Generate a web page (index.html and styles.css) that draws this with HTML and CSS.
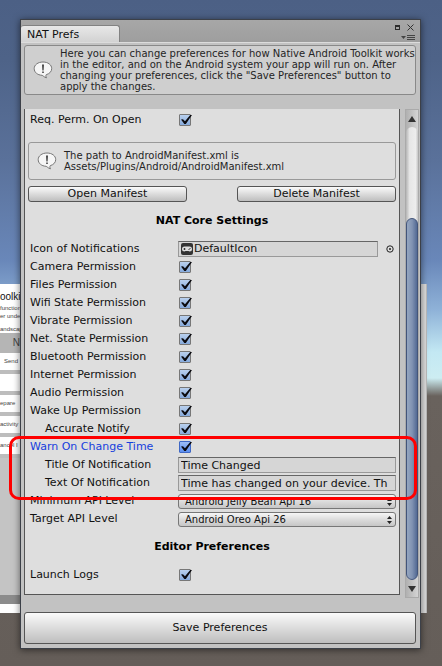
FILE: index.html
```html
<!DOCTYPE html>
<html lang="en">
<head>
<meta charset="utf-8">
<meta name="viewport" content="width=device-width, initial-scale=1">
<title>NAT Prefs</title>
<link rel="stylesheet" href="styles.css">
</head>
<body>
<div class="scene" aria-hidden="true">
  <div class="game">
    <div class="game-head">
      <div class="game-title">oolki</div>
      <div>function</div>
      <div>er under</div>
      <div class="game-last">andscap</div>
    </div>
    <div class="game-bar">N</div>
    <div class="game-item game-end">Send</div>
    <div class="game-item">&nbsp;</div>
    <div class="game-item">epare</div>
    <div class="game-item">activity</div>
    <div class="game-item">ancel I</div>
    <div class="game-foot"></div>
  </div>
</div>

<main class="window">
  <header class="titlebar">
    <div class="tab">NAT Prefs</div>
    <div class="window-tools">
      <div class="tool-row">
        <button class="tool" type="button" aria-label="Maximize"><svg width="5" height="5" viewBox="0 0 5 5"><path d="M0 0h5v5H0zM1 2v2h3V2z" fill="#2c2c2c" fill-rule="evenodd"/></svg></button>
        <button class="tool" type="button" aria-label="Close"><svg width="7" height="7" viewBox="0 0 7 7"><path d="M.5.5l6 6M6.500.5l-6 6" stroke="#333" fill="none"/></svg></button>
      </div>
      <button class="tool" type="button" aria-label="Window menu"><svg width="14" height="5" viewBox="0 0 14 5"><path d="M0 1h5L2.500 4z" fill="#444"/><path d="M6 .5h8M6 2.500h8M6 4.500h8" stroke="#444"/></svg></button>
    </div>
  </header>

  <section class="help">
    <svg class="bubble" width="20" height="18" viewBox="0 0 20 18"><path d="M10 1C5 1 1.200 3.800 1.200 7.600S4.500 14 9 14.300c1 .1 2 2 4.500 2.500-.8-1.200-.8-2.200-.3-3.100 3.400-1 5.500-3.200 5.500-6.100C18.700 3.800 15 1 10 1z" fill="#f6f6f6" stroke="#777"/><path d="M9 3.500h2l-.4 6H9.400zM9.200 10.500h1.600v1.600H9.200z" fill="#444"/></svg>
    <p>Here you can change preferences for how Native Android Toolkit works in the editor, and on the Android system your app will run on. After changing your preferences, click the "Save Preferences" button to apply the changes.</p>
  </section>

  <div class="scroll">
    <form class="panel" onsubmit="return false">
      <div class="row"><label for="req">Req. Perm. On Open</label><input class="check" id="req" type="checkbox" checked></div>

      <div class="help path-help">
        <svg class="bubble" width="20" height="18" viewBox="0 0 20 18"><path d="M10 1C5 1 1.200 3.800 1.200 7.600S4.500 14 9 14.300c1 .1 2 2 4.500 2.500-.8-1.200-.8-2.200-.3-3.100 3.400-1 5.500-3.200 5.500-6.100C18.700 3.800 15 1 10 1z" fill="#f6f6f6" stroke="#777"/><path d="M9 3.500h2l-.4 6H9.400zM9.200 10.500h1.600v1.600H9.200z" fill="#444"/></svg>
        <p>The path to AndroidManifest.xml is Assets/Plugins/Android/AndroidManifest.xml</p>
      </div>

      <div class="actions">
        <button class="btn" type="button">Open Manifest</button>
        <button class="btn" type="button">Delete Manifest</button>
      </div>

      <h2>NAT Core Settings</h2>

      <div class="row"><label for="icon">Icon of Notifications</label>
        <div class="object">
          <button class="object-field" id="icon" type="button"><svg width="12" height="12" viewBox="0 0 12 12"><rect width="12" height="12" rx="2" fill="#333"/><path d="M3.500 3.500h5a2.500 2.500 0 0 1 0 5L7.500 8h-3l-1 .5a2.500 2.500 0 0 1 0-5z" fill="#ddd"/><path d="M2.500 6h2M3.500 5v2M7.500 6.500h1M8.500 5.500h1" stroke="#333"/></svg>DefaultIcon</button>
          <button class="picker" type="button" aria-label="Select icon"><svg width="8" height="8" viewBox="0 0 8 8"><circle cx="4" cy="4" r="3.200" fill="none" stroke="#222"/><circle cx="4" cy="4" r="1" fill="#222"/></svg></button>
        </div>
      </div>
      <div class="row"><label for="cam">Camera Permission</label><input class="check" id="cam" type="checkbox" checked></div>
      <div class="row"><label for="files">Files Permission</label><input class="check" id="files" type="checkbox" checked></div>
      <div class="row"><label for="wifi">Wifi State Permission</label><input class="check" id="wifi" type="checkbox" checked></div>
      <div class="row"><label for="vib">Vibrate Permission</label><input class="check" id="vib" type="checkbox" checked></div>
      <div class="row"><label for="net">Net. State Permission</label><input class="check" id="net" type="checkbox" checked></div>
      <div class="row"><label for="blue">Bluetooth Permission</label><input class="check" id="blue" type="checkbox" checked></div>
      <div class="row"><label for="inet">Internet Permission</label><input class="check" id="inet" type="checkbox" checked></div>
      <div class="row"><label for="audio">Audio Permission</label><input class="check" id="audio" type="checkbox" checked></div>
      <div class="row"><label for="wake">Wake Up Permission</label><input class="check" id="wake" type="checkbox" checked></div>
      <div class="row child"><label for="acc">Accurate Notify</label><input class="check" id="acc" type="checkbox" checked></div>
      <div class="marked">
        <div class="row active"><label for="warn">Warn On Change Time</label><input class="check" id="warn" type="checkbox" checked></div>
        <div class="row child"><label for="ntitle">Title Of Notification</label><input class="text" id="ntitle" type="text" value="Time Changed"></div>
        <div class="row child"><label for="ntext">Text Of Notification</label><input class="text" id="ntext" type="text" value="Time has changed on your device. Th"></div>
      </div>
      <div class="row"><label for="min">Minimum API Level</label><div class="select"><select id="min"><option>Android Jelly Bean Api 16</option></select><svg width="5" height="8" viewBox="0 0 5 8"><path d="M0 3h5L2.500 0zM0 5h5L2.500 8z" fill="#222"/></svg></div></div>
      <div class="row"><label for="target">Target API Level</label><div class="select"><select id="target"><option>Android Oreo Api 26</option></select><svg width="5" height="8" viewBox="0 0 5 8"><path d="M0 3h5L2.500 0zM0 5h5L2.500 8z" fill="#222"/></svg></div></div>

      <h2>Editor Preferences</h2>

      <div class="row"><label for="logs">Launch Logs</label><input class="check" id="logs" type="checkbox" checked></div>
    </form>

    <div class="scrollbar">
      <button class="arrow" type="button" aria-label="Scroll up"><svg width="8" height="6" viewBox="0 0 8 6"><path d="M0 6h8L4 0z" fill="#333"/></svg></button>
      <div class="track"><div class="thumb"></div></div>
      <button class="arrow" type="button" aria-label="Scroll down"><svg width="8" height="6" viewBox="0 0 8 6"><path d="M0 0h8L4 6z" fill="#333"/></svg></button>
    </div>
  </div>

  <button class="btn save" type="button">Save Preferences</button>
</main>
</body>
</html>
```
FILE: styles.css
```css
* { box-sizing: border-box; }

body {
  margin: 0;
  min-height: 100vh;
  padding: 19px 21px 17px 20px;
  position: relative;
  color: #111;
  font: 11px/18px "DejaVu Sans", Verdana, sans-serif;
  background: linear-gradient(#4c6085 0, #4e6388 60px, #5a719a 160px, #6987b9 260px, #8fb2d8 310px, #c3e8f3 352px, #cdedf2 378px, #69625d 396px, #655e59 100%);
}

button, input, select { font: inherit; color: inherit; }
button { cursor: pointer; }

/* Game view behind the window */
.scene {
  position: absolute;
  inset: 284px 15px auto 0;
}
.game {
  background: linear-gradient(90deg, #bdbdbd 50%, #dedede 50%);
  border-right: 1px solid #bbb;
  font: 6px/8px "Liberation Sans", Arial, sans-serif;
  color: #444;
}
.game > div { width: 21px; white-space: nowrap; }
.game-head { height: 49px; padding-top: 6px; background: #fff; }
.game-title { font-size: 10px; line-height: 14px; color: #111; }
.game-last { margin-top: 5px; }
.game-bar { height: 20px; padding-right: 1px; background: #b5b5b5; font-size: 10px; line-height: 20px; text-align: right; }
.game-item { height: 17px; margin-bottom: 4px; background: #fff; line-height: 17px; }
.game-end { padding-right: 3px; text-align: right; }
.game-foot { height: 155px; background: linear-gradient(#c4c4c4 137px, #8c8c8c 137px, #8c8c8c 146px, #fff 146px); }

/* Window */
.window {
  position: relative;
  display: flex;
  flex-direction: column;
  min-height: calc(100vh - 36px);
  padding-bottom: 4px;
  background: #c2c2c2;
  border: 1px solid #3c4048;
  box-shadow: 0 1px 7px rgba(0, 0, 0, .55);
}
.titlebar {
  display: flex;
  justify-content: space-between;
  height: 23px;
  padding-top: 5px;
  background: linear-gradient(#a7a7a7, #9e9e9e);
  border-bottom: 1px solid #dcdcdc;
}
.tab {
  width: 99px;
  padding-left: 6px;
  line-height: 17px;
  background: linear-gradient(#e8e8e8, #d2d2d2);
  border: solid #828282;
  border-width: 1px 1px 0 0;
  border-radius: 3px 3px 0 0;
}
.window-tools { display: flex; flex-direction: column; align-items: flex-end; gap: 6px; padding-right: 5px; }
.tool-row { display: flex; align-items: center; gap: 7px; padding-right: 1px; height: 4px; }
.tool, .picker { display: flex; padding: 0; border: 0; background: none; }

.help {
  display: flex;
  align-items: center;
  gap: 7px;
  margin: 2px 4px 0 3px;
  padding: 2px 0 2px 8px;
  min-height: 50px;
  border: 1px solid #898989;
  border-radius: 3px;
  background: #cfcfcf;
  color: #252525;
  font-size: 10px;
  line-height: 11px;
}
.help p { margin: 0; }
.bubble { flex: none; }

.scroll { display: flex; flex: 1; gap: 5px; margin: 14px 1px 14px 3px; }
.panel {
  flex: 1;
  min-width: 0;
  margin: 0 0 3px;
  padding: 2px 3px 10px;
  background: #dedede;
  border: solid #555;
  border-width: 0 1px 1px;
}
.path-help { margin: 13px 0 6px; padding-right: 60px; min-height: 38px; background: none; border-color: #999; }
.actions { display: flex; justify-content: space-between; gap: 50px; }
.btn {
  flex: 1;
  height: 16px;
  padding: 0;
  line-height: 14px;
  border: 1px solid #555;
  border-radius: 3px;
  background: linear-gradient(#fafafa, #dcdcdc 50%, #bebebe);
}
.save { flex: none; height: 32px; margin: 0 4px 0 3px; }

h2 { margin: 10px 0; text-align: center; font-size: 11px; line-height: 18px; font-weight: bold; color: #000; }

.row { display: grid; grid-template-columns: 148px minmax(0, 1fr); align-items: center; height: 18px; padding-left: 2px; white-space: nowrap; }
.child label { padding-left: 15px; }
.active label { color: #1540dd; }

.check {
  appearance: none;
  position: relative;
  width: 12px;
  height: 12px;
  margin: 0 0 0 1px;
  border: 1px solid #777;
  border-radius: 1px;
  background: linear-gradient(#b9d0ee, #86aadc);
}
.active .check { border-color: #3f68c5; background: linear-gradient(#9cbdf5, #5b8ef0); }
.check:checked::before {
  content: "";
  position: absolute;
  inset: 0 -2px 1px 1px;
  background: #0b0b10;
  clip-path: polygon(0 50%, 18% 46%, 36% 70%, 84% 0, 100% 0, 44% 100%, 30% 100%);
}

.text, .object-field {
  width: 100%;
  height: 16px;
  padding: 0 2px;
  border: 1px solid #999;
  border-top-color: #666;
  border-radius: 0;
  background: #d6d6d6;
  line-height: 14px;
}
.object { display: flex; align-items: center; justify-content: space-between; gap: 8px; padding-right: 2px; }
.object-field { display: flex; align-items: center; gap: 1px; text-align: left; }

.select { position: relative; display: flex; }
.select select {
  appearance: none;
  width: 100%;
  height: 15px;
  padding: 0 14px 0 6px;
  border: 1px solid #777;
  border-radius: 3px;
  background: linear-gradient(#f6f6f6, #dcdcdc 50%, #c6c6c6);
  font-size: 10px;
  line-height: 13px;
}
.select svg { position: absolute; right: 4px; top: 4px; pointer-events: none; }

/* Callout around the change-time options */
.marked { position: relative; z-index: 2; }
.marked::after {
  content: "";
  position: absolute;
  inset: -2px -21px -8px -19px;
  border: 3px solid #f00;
  border-radius: 10px;
  pointer-events: none;
}

.scrollbar { display: flex; flex-direction: column; width: 14px; background: linear-gradient(90deg, #b0b0b0, #d4d4d4); border: 1px solid #aaa; }
.arrow { display: flex; flex: none; align-items: center; justify-content: center; height: 17px; padding: 0; border: 0; background: none; }
.track { display: flex; flex: 1; align-items: flex-end; border-radius: 6px; background: linear-gradient(90deg, #b4b4b4, #e6e6e6 30%, #ededed 80%, #c4c4c4); }
.thumb { width: 100%; height: 80%; border: 1px solid #43557a; border-radius: 6px; background: linear-gradient(90deg, #95a6c0, #8193b3 50%, #536a94); }
```
